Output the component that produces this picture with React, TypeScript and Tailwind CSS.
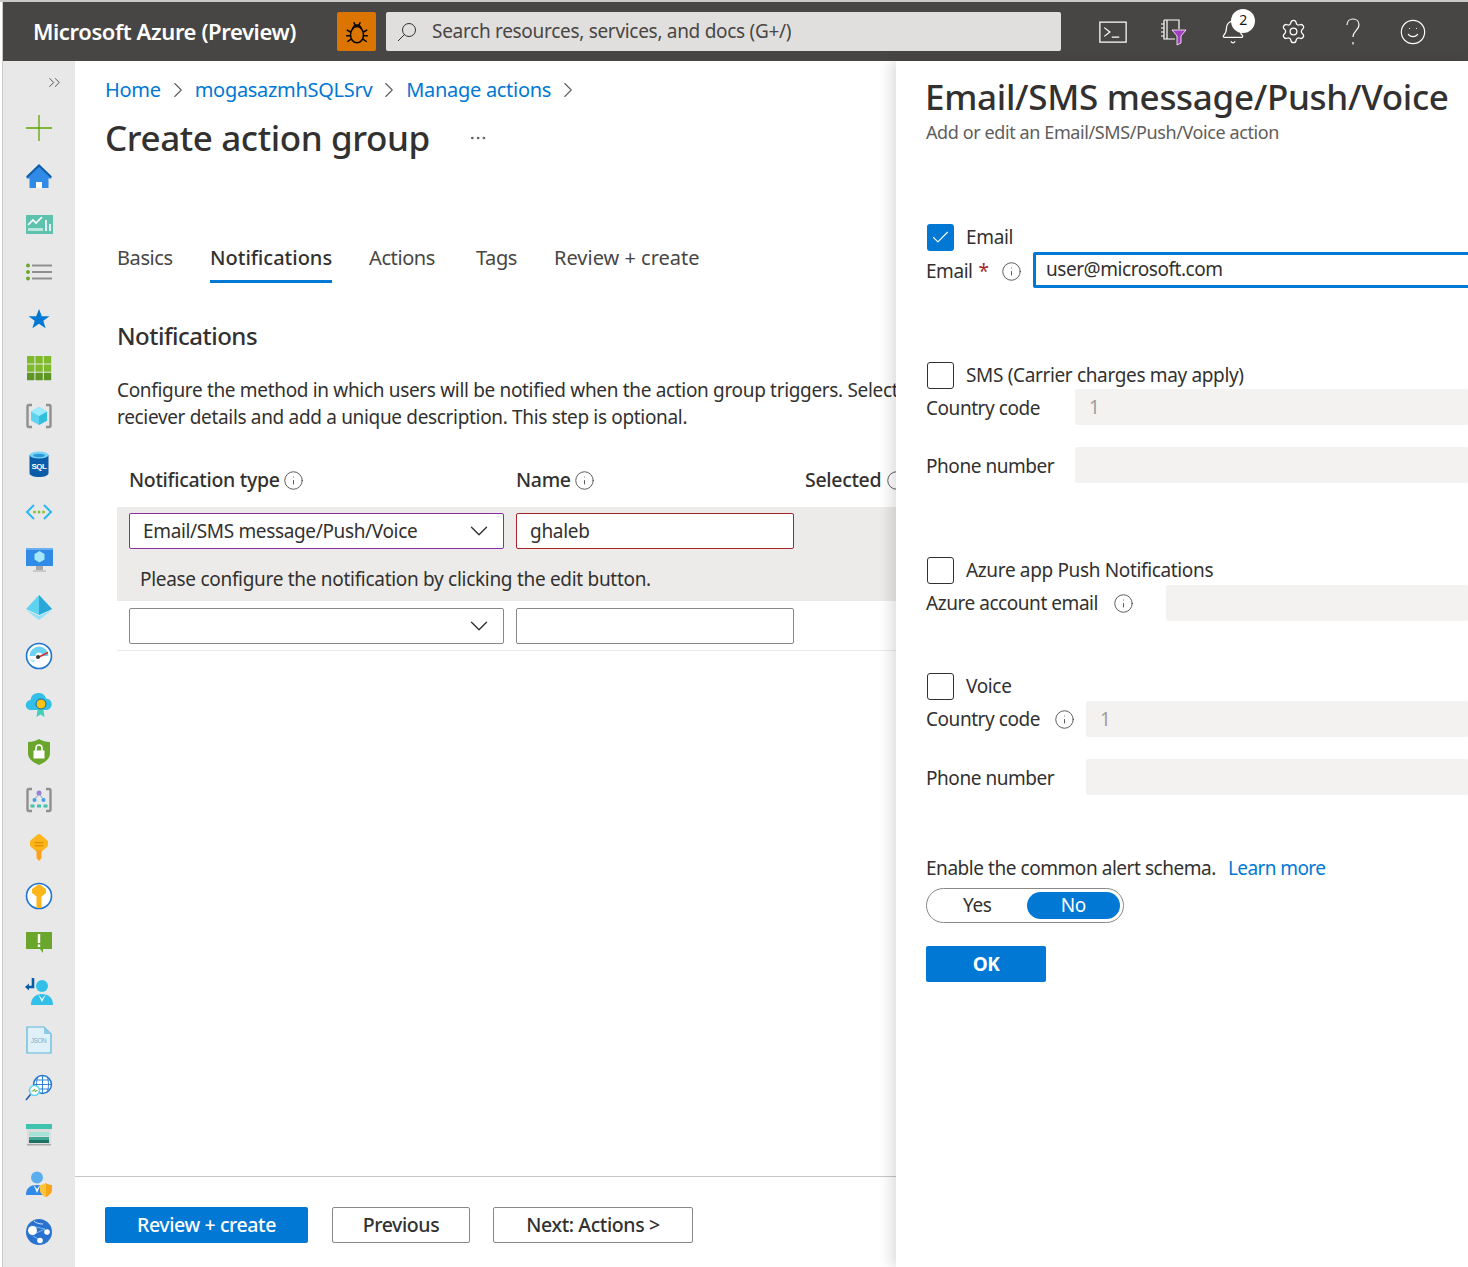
import { Bell, Check, ChevronDown, ChevronRight, ChevronsRight, Ellipsis, Info, Settings, Smile } from 'lucide-react'
import type { ReactNode } from 'react'

const font = "font-['Noto_Sans','Open_Sans',sans-serif]"

function Svg({ children }: { children: ReactNode }) {
  return (
    <svg viewBox="0 0 28 28" className="w-7 h-7">
      {children}
    </svg>
  )
}

// Sidebar service icons, drawn by hand
const sideIcons: ReactNode[] = [
  <Svg><path d="M14 1v26M1 14h26" stroke="#5ea500" strokeWidth="1.3" fill="none" /></Svg>,
  <Svg>
    <path d="M14 4 27 16.5h-3.5V26h-19V16.5H1z" fill="#2f8ae8" />
    <path d="M14 2 1 14.5l1.5 1.5L14 5l11.5 11 1.5-1.5z" fill="#0f5fa8" />
    <path d="M11 20h6v6h-6z" fill="#fff" />
  </Svg>,
  <Svg>
    <path d="M1 5h27v19H1z" fill="#5fc2ae" />
    <path d="M3 15l5-5 3 3 6-6" stroke="#fff" strokeWidth="1.6" fill="none" />
    <path d="M3 18h15v3H3z" fill="#b9e6dc" />
    <path d="M20 10h2v11h-2zM24 14h2v7h-2z" fill="#e2f5f0" />
  </Svg>,
  <Svg>
    <circle cx="3" cy="7.5" r="2" fill="#6fa82c" />
    <circle cx="3" cy="14" r="2" fill="#6fa82c" />
    <circle cx="3" cy="20.5" r="2" fill="#6fa82c" />
    <path d="M7 6.5h20v2H7zM7 13h20v2H7zM7 19.5h20v2H7z" fill="#8f8f8f" />
  </Svg>,
  <Svg><path d="m14 3 2.8 7.2h7.700l-6.200 4.600 2.300 7.500L14 17.800l-6.600 4.500 2.300-7.500-6.200-4.600h7.700z" fill="#0078d4" /></Svg>,
  <Svg>
    <path d="M2 2h7.400v7.400H2zM10.400 2h7.400v7.400h-7.400zM18.800 2h7.400v7.400h-7.400zM2 10.400h7.400v7.400H2zM10.400 10.400h7.400v7.400h-7.400zM18.800 10.400h7.400v7.400h-7.400z" fill="#7fba2c" />
    <path d="M2 18.800h7.400v7.400H2zM10.400 18.800h7.400v7.400h-7.400zM18.800 18.800h7.400v7.400h-7.400z" fill="#5e9624" />
  </Svg>,
  <Svg>
    <path d="M7 3H4Q2.500 3 2.500 5v18q0 2 1.500 2h3M21 3h3q1.500 0 1.500 2v18q0 2-1.500 2h-3" stroke="#8f8f8f" strokeWidth="2.400" fill="none" />
    <path d="m14 5 8 4.500v9L14 23l-8-4.500v-9z" fill="#5ed3f0" />
    <path d="m14 14 8-4.500v9L14 23z" fill="#32bedd" />
    <path d="m14 5 8 4.500-8 4.500-8-4.500z" fill="#9cebff" />
  </Svg>,
  <Svg>
    <path d="M4.500 5v18c0 2.500 4.200 4 9.500 4s9.500-1.500 9.500-4V5z" fill="#0a5ca8" />
    <ellipse cx="14" cy="5" rx="9.500" ry="3.500" fill="#7ad4f5" />
    <ellipse cx="14" cy="5.500" rx="6" ry="1.700" fill="#2a9bd8" />
    <text x="14" y="19" textAnchor="middle" fontSize="8" fontWeight="700" fill="#fff" fontFamily="Liberation Sans, sans-serif">SQL</text>
  </Svg>,
  <Svg>
    <path d="M9 7 2 14l7 7M19 7l7 7-7 7" stroke="#2ab8f0" strokeWidth="2" fill="none" />
    <circle cx="9.500" cy="14" r="1.500" fill="#8ac23a" />
    <circle cx="14" cy="14" r="1.500" fill="#8ac23a" />
    <circle cx="18.500" cy="14" r="1.500" fill="#8ac23a" />
  </Svg>,
  <Svg>
    <path d="M1 2h27v18H1z" fill="#2f8ae8" />
    <path d="M1 2h27v2H1z" fill="#6aaef0" />
    <path d="m14.500 5 5 3v5.500l-5 3-5-3V8z" fill="#a5e8fa" />
    <path d="M11 20h7v4h-7z" fill="#a8a8a8" />
    <path d="M8 24h13v2H8z" fill="#c8c8c8" />
  </Svg>,
  <Svg>
    <path d="M14 1 27 15l-13 6L1 15z" fill="#5ed3f0" />
    <path d="M14 1 27 15l-13 6z" fill="#2aa6d8" />
    <path d="m1 16 13 6 13-6-13 10z" fill="#8fe2f8" />
  </Svg>,
  <Svg>
    <circle cx="14" cy="14" r="12.500" fill="#fff" stroke="#1e76d2" strokeWidth="1.600" />
    <path d="M4.500 14a9.500 9.500 0 0 1 19 0h-6a3.500 3.500 0 0 0-7 0z" fill="#6dd2f2" />
    <path d="M4.500 17a9.500 9.500 0 0 0 4 4l2-3z" fill="#b6ecfa" />
    <path d="m14 15 9-4.500" stroke="#e0292f" strokeWidth="1.400" />
    <circle cx="13" cy="15" r="2" fill="#333" />
  </Svg>,
  <Svg>
    <path d="M6 20a5 5 0 0 1-.5-10A8 8 0 0 1 21 8.500a5.800 5.800 0 0 1 1 11.500z" fill="#32c0e8" />
    <path d="m13 17 5 0 1.500 10-4-2.500-4 2.500z" fill="#41d1b8" />
    <circle cx="16" cy="14" r="5" fill="#f9c510" stroke="#1e5fa8" />
  </Svg>,
  <Svg>
    <path d="M14 1c3 2 7 3 11 3v11c0 6-5 9.500-11 12C8 24.500 3 21 3 15V4c4 0 8-1 11-3z" fill="#6aa62c" />
    <path d="M8.500 12.500h11v8h-11z" fill="#fff" />
    <path d="M11 13v-3a3 3 0 0 1 6 0v3" stroke="#fff" strokeWidth="1.600" fill="none" />
  </Svg>,
  <Svg>
    <path d="M7 3H4Q2.500 3 2.500 5v18q0 2 1.500 2h3M21 3h3q1.500 0 1.500 2v18q0 2-1.500 2h-3" stroke="#8f8f8f" strokeWidth="2.400" fill="none" />
    <path d="M14 8 9 14M14 8l5 6" stroke="#7aa7cc" />
    <circle cx="14" cy="7" r="2.500" fill="#9a7fd8" />
    <circle cx="9.500" cy="14" r="2" fill="#4a9de8" />
    <circle cx="18.500" cy="14" r="2" fill="#4a9de8" />
    <path d="M5.500 18.500h4v3h-4zM12 18.500h4v3h-4zM18.500 18.500h4v3h-4z" fill="#3fc2ae" />
  </Svg>,
  <Svg>
    <path d="M14 0q1 0 2 1l6 5q1 1 1 2v3q0 1-1 2l-6 5H12l-6-5q-1-1-1-2V8q0-1 1-2l6-5q1-1 2-1z" fill="#fdb51c" />
    <path d="M11.500 16h5v8l-2.500 3-2.500-3z" fill="#fda11c" />
    <path d="M9.500 8h9v1.200h-9zM9.500 11h9v1.200h-9z" fill="#e08d00" />
  </Svg>,
  <Svg>
    <circle cx="14" cy="14" r="12.500" fill="#fff" stroke="#1e76d2" strokeWidth="1.600" />
    <path d="m14 2 7 5v4l-4.500 3.500V26h-5V14.500L7 11V7z" fill="#fdb51c" />
  </Svg>,
  <Svg>
    <path d="M1 2h26v17H1z" fill="#6aa62c" />
    <path d="m15 19 3 0 0 4z" fill="#6aa62c" />
    <path d="M12.800 4h2.400v9h-2.400zM12.800 14.500h2.400V17h-2.400z" fill="#fff" />
  </Svg>,
  <Svg>
    <circle cx="17" cy="8" r="6" fill="#32c0e8" />
    <path d="M6 27c0-7 4-11 11-11s11 4 11 11z" fill="#32c0e8" />
    <path d="m13 16 4 5 4-5-4 8z" fill="#fff" />
    <path d="M8 0v9H3" stroke="#0a5ca8" strokeWidth="2.600" fill="none" />
    <path d="m0 9 4-3.500v7z" fill="#0a5ca8" />
  </Svg>,
  <Svg>
    <path d="M2 1h17l7 7v19H2z" fill="#dff0f8" stroke="#5ab4de" strokeWidth="1.200" />
    <path d="M19 1v7h7z" fill="#8acbe8" />
    <text x="13.500" y="17" textAnchor="middle" fontSize="6.500" fill="#7fb0cc" fontFamily="Liberation Sans, sans-serif">JSON</text>
  </Svg>,
  <Svg>
    <circle cx="17.500" cy="10.500" r="9" fill="#fff" stroke="#1e76d2" strokeWidth="1.400" />
    <path d="M8.500 10.500h18M17.500 1.500v18M10 6h15M10 15h15M13 2.500c-2 5-2 11 0 16M22 2.500c2 5 2 11 0 16" stroke="#1e76d2" fill="none" strokeWidth=".9" />
    <circle cx="9.500" cy="16.500" r="5" fill="#fff" stroke="#5ed3f0" strokeWidth="1.600" />
    <path d="M6.500 17h2l1-2 1 3 1-1.500h1" stroke="#6aa62c" fill="none" />
    <path d="M5.500 20.500 1 26" stroke="#1e5fa8" strokeWidth="1.600" />
  </Svg>,
  <Svg>
    <path d="M1 2h26v5H1z" fill="#3fc2ae" />
    <path d="M2 7h24v15H2z" fill="#dcdcdc" />
    <path d="M4 10h20v4H4z" fill="#a6e3d6" />
    <path d="M4 15h20v3H4z" fill="#3fa796" />
    <path d="M4 18h20v3H4z" fill="#1f6f63" />
    <path d="M2 22h24v1.500H2z" fill="#a8a8a8" />
  </Svg>,
  <Svg>
    <circle cx="12" cy="7.500" r="6" fill="#5aaef0" />
    <path d="M1 25c0-7 4-10 11-10 4 0 7 1 9 3v7z" fill="#2f8ae8" />
    <path d="m8.500 15 3.500 4 3.500-4-3.500 8z" fill="#fff" />
    <path d="M21 13c2 1.500 4 2 6 2v5c0 3-3 5.500-6 7-3-1.500-6-4-6-7v-5c2 0 4-.5 6-2z" fill="#f9a51a" />
    <path d="M21 13v14c-3-1.500-6-4-6-7v-5c2 0 4-.5 6-2z" fill="#fdc43d" />
  </Svg>,
  <Svg>
    <circle cx="14" cy="14" r="13" fill="#2a72d0" />
    <path d="M6 8 20 11M7 17l13-6M8 18l9 5" stroke="#7ab5ee" />
    <circle cx="7.500" cy="12.500" r="4.500" fill="#fff" />
    <circle cx="22" cy="14" r="2.800" fill="#fff" />
    <circle cx="15" cy="22.500" r="2.800" fill="#fff" />
    <path d="M9 3c2 2 5 3 9 3" stroke="#cfe6fb" fill="none" />
  </Svg>,
]

function HeaderIcons() {
  return (
    <div className="flex items-center h-full gap-[30px] ml-[37px]">
      <svg viewBox="0 0 24 24" className="w-[30px] h-[30px] shrink-0" fill="none" stroke="#fff" strokeWidth="1">
        <path d="M1.500 4h21v16h-21z" />
        <path d="m5 8.500 4.500 3.500L5 15.500M11 16h6" />
      </svg>
      <svg viewBox="0 0 30 30" className="w-[30px] h-[30px] shrink-0" fill="none">
        <path d="M6 3h15v9M17 22H6V3M9 3v19M3 7h3M3 11h3M3 15h3M3 19h3" stroke="#fff" strokeWidth="1.200" />
        <path d="M14 13h14l-5 6v7l-4 2v-9z" fill="#a13fc0" stroke="#fff" strokeWidth=".8" />
      </svg>
      <div className="relative w-[30px] h-[30px] shrink-0">
        <Bell size={26} strokeWidth={1.1} color="#fff" className="absolute left-[2px] top-[2px]" />
        <span className="absolute left-[13px] -top-[8px] w-[24px] h-[24px] rounded-full bg-white text-[#1b1a19] text-[14px] leading-[22px] text-center">2</span>
      </div>
      <Settings size={27} strokeWidth={1.1} color="#fff" className="shrink-0 mx-[1.500px]" />
      <svg viewBox="0 0 30 30" className="w-[30px] h-[30px] shrink-0" fill="none" stroke="#fff" strokeWidth="1.200">
        <path d="M9 8c0-3.500 2.500-6 6-6s6 2.500 6 6c0 5-6 6-6 12M15 25v2.500" />
      </svg>
      <Smile size={28} strokeWidth={1} color="#fff" className="shrink-0 ml-px" />
    </div>
  )
}

function Crumb({ label }: { label: string }) {
  return (
    <>
      <span className="text-[#0078d4]">{label}</span>
      <ChevronRight size={26} strokeWidth={1} className="text-[#605e5c] mx-[4px]" />
    </>
  )
}

function Tip({ className = '' }: { className?: string }) {
  return <Info size={21} strokeWidth={1} className={`text-[#484644] shrink-0 ${className}`} />
}

function Tab({ label, active, className }: { label: string; active?: boolean; className: string }) {
  return (
    <div className={`h-[47px] flex items-center whitespace-nowrap border-b-[3px] ${active ? 'border-[#0078d4] font-medium text-[#323130] tracking-normal' : 'border-transparent text-[#484644]'} ${className}`}>
      {label}
    </div>
  )
}

function SelectBox({ value, border }: { value?: string; border: string }) {
  return (
    <div className={`w-[375px] h-[36px] shrink-0 bg-white border rounded-[2px] flex items-center justify-between pl-[13px] pr-[9px] ${border}`}>
      <span className="pt-px tracking-[-0.35px]">{value}</span>
      <ChevronDown size={30} strokeWidth={1.1} className="text-[#323130]" />
    </div>
  )
}

function NameBox({ value, border }: { value?: string; border: string }) {
  return (
    <div className={`w-[278px] h-[36px] shrink-0 bg-white border rounded-[2px] flex items-center pl-[13px] ${border}`}>
      {value}
    </div>
  )
}

function CheckRow({ label, checked, className }: { label: string; checked?: boolean; className: string }) {
  return (
    <div className={`flex items-center gap-[12px] h-[27px] pl-px tracking-[-0.35px] ${className}`}>
      <div className={`w-[27px] h-[27px] rounded-[3px] flex items-center justify-center ${checked ? 'bg-[#0078d4]' : 'border border-[#323130] bg-white'}`}>
        {checked && <Check size={21} strokeWidth={1.3} color="#fff" />}
      </div>
      <span>{label}</span>
    </div>
  )
}

function DisabledRow({ label, value, tip, left, className = '' }: { label: string; value?: string; tip?: ReactNode; left: string; className?: string }) {
  return (
    <div className={`flex items-center h-[36px] ${className}`}>
      <div className={`flex items-center shrink-0 ${tip ? '' : 'pt-[2px]'} ${left}`}>
        <span className="whitespace-nowrap">{label}</span>
        {tip}
      </div>
      <div className="flex-1 h-[36px] bg-[#f3f2f1] rounded-[2px] pl-[14px] pt-px flex items-center text-[#a19f9d]">{value}</div>
    </div>
  )
}

export default function App() {
  return (
    <div className={`w-[1468px] h-[1267px] overflow-hidden flex flex-col bg-white border-t-2 border-[#c9c9c9] pl-[2px] text-[19px] tracking-[-0.45px] text-[#323130] ${font}`}>
      {/* Top bar */}
      <header className="h-[59px] shrink-0 bg-[#484644] border-l border-[#c9c9c9] flex items-center text-white">
        <div className="w-[334px] pl-[30px] text-[22px] font-semibold tracking-[-0.4px] whitespace-nowrap shrink-0">Microsoft Azure (Preview)</div>
        <div className="w-[39px] h-[39px] rounded-[2px] bg-[#db7500] flex items-center justify-center shrink-0">
          <svg viewBox="0 0 24 24" className="w-[26px] h-[26px]" fill="none" stroke="#000" strokeWidth="1.400">
            <ellipse cx="12" cy="14.500" rx="6" ry="7.500" />
            <path d="M8 9.500a4 4 0 0 1 8 0M9 3l1.500 3M15 3l-1.500 3M6 12 2.500 10M18 12l3.500-2M6 15.500H2M18 15.500h4M6.500 18.500 3 21M17.500 18.500 21 21" />
          </svg>
        </div>
        <div className="w-[675px] h-[39px] ml-[10px] shrink-0 rounded-[2px] bg-[#e1dfdd] flex items-center pl-[11px] gap-[15px] tracking-[-0.3px] text-[#484644] whitespace-nowrap">
          <svg viewBox="0 0 20 20" className="w-5 h-5 shrink-0" fill="none" stroke="#323130" strokeWidth="1">
            <circle cx="12" cy="8" r="6.500" />
            <path d="M7.500 12.500 1 19" />
          </svg>
          <span>Search resources, services, and docs (G+/)</span>
        </div>
        <HeaderIcons />
      </header>

      <div className="flex-1 flex min-h-0">
        {/* Left service rail */}
        <aside className="w-[73px] shrink-0 bg-[#e8e8e8] border-l border-[#c9c9c9] flex flex-col">
          <div className="h-[43px] shrink-0 flex justify-end items-center pr-[11px]">
            <ChevronsRight size={19} strokeWidth={1} className="text-[#323130]" />
          </div>
          {sideIcons.map((icon, i) => (
            <div key={i} className="h-[48px] shrink-0 flex items-center justify-center">
              {icon}
            </div>
          ))}
        </aside>

        {/* Main blade */}
        <main className="flex-1 min-w-0 flex flex-col overflow-hidden tracking-[-0.3px]">
          <div className="flex-1 min-h-0 overflow-hidden">
            <div className="pl-[30px] pt-[14px]">
              <div className="flex items-center h-[30px] text-[20px] tracking-[-0.3px]">
                <Crumb label="Home" />
                <Crumb label="mogasazmhSQLSrv" />
                <Crumb label="Manage actions" />
              </div>
              <div className="flex items-center mt-[9px] h-[48px]">
                <h1 className="text-[35px] font-medium tracking-[-0.4px] whitespace-nowrap">Create action group</h1>
                <Ellipsis size={20} strokeWidth={1} className="ml-[38px] text-[#323130]" />
              </div>
            </div>

            <div className="pl-[42px] mt-[74px]">
              <div className="flex items-center text-[20px] tracking-[-0.4px]">
                <Tab label="Basics" className="w-[93px]" />
                <Tab label="Notifications" active className="w-[122px]" />
                <Tab label="Actions" className="w-[107px] pl-[37px]" />
                <Tab label="Tags" className="w-[78px] pl-[37px]" />
                <Tab label="Review + create" className="pl-[37px] tracking-[0px]" />
              </div>
              <h2 className="mt-[37px] text-[24px] font-medium tracking-[-0.5px] leading-[32px]">Notifications</h2>
              <p className="mt-[25px] leading-[27px] whitespace-nowrap tracking-[-0.33px] w-[779px]">
                Configure the method in which users will be notified when the action group triggers. Select<br />
                reciever details and add a unique description. This step is optional.
              </p>

              <div className="flex items-center h-[30px] mt-[34px] pl-[12px] font-medium text-[19.500px] whitespace-nowrap">
                <div className="w-[387px] shrink-0 flex items-center gap-[3px]">Notification type<Tip /></div>
                <div className="w-[289px] shrink-0 flex items-center gap-[3px]">Name<Tip /></div>
                <div className="flex items-center gap-[5px] shrink-0">Selected<Tip /></div>
              </div>

              <div className="mt-[12px] bg-[#edebe9] h-[94px] pl-[12px] pt-[6px]">
                <div className="flex gap-[12px]">
                  <SelectBox value="Email/SMS message/Push/Voice" border="border-[#8a2da5]" />
                  <NameBox value="ghaleb" border="border-[#a4262c]" />
                </div>
                <p className="pl-[11px] mt-[16px] leading-[28px] whitespace-nowrap">Please configure the notification by clicking the edit button.</p>
              </div>
              <div className="h-[50px] pl-[12px] pt-[7px] flex gap-[12px] border-b border-[#edebe9]">
                <SelectBox border="border-[#8a8886]" />
                <NameBox border="border-[#8a8886]" />
              </div>
            </div>
          </div>

          {/* Footer actions */}
          <footer className="h-[91px] shrink-0 border-t border-[#c8c6c4] pl-[30px] pt-[30px] flex gap-[24px] text-[19.500px] font-medium tracking-[-0.4px]">
            <button className="w-[203px] h-[36px] rounded-[2px] bg-[#0078d4] text-white">Review + create</button>
            <button className="w-[138px] h-[36px] rounded-[2px] border border-[#8a8886]">Previous</button>
            <button className="w-[200px] h-[36px] rounded-[2px] border border-[#8a8886] -ml-px">Next: Actions &gt;</button>
          </footer>
        </main>

        {/* Context pane */}
        <section className="w-[572px] shrink-0 relative z-10 bg-white pl-[30px] overflow-hidden shadow-[-6px_0_12px_rgba(0,0,0,0.12)]">
          <h2 className="text-[35px] font-medium leading-[48px] mt-[12px] -ml-px tracking-[-0.3px] whitespace-nowrap">Email/SMS message/Push/Voice</h2>
          <p className="text-[18px] leading-[24px] text-[#605e5c] -mt-[1px] tracking-[-0.4px]">Add or edit an Email/SMS/Push/Voice action</p>

          <CheckRow label="Email" checked className="mt-[80px]" />
          <div className="flex items-center h-[36px] mt-px">
            <div className="w-[107px] shrink-0 flex items-center pt-[2px]">
              <span>Email</span>
              <span className="text-[#a4262c] ml-[6px] mr-[12px]">*</span>
              <Tip />
            </div>
            <div className="flex-1 -mr-[4px] h-[36px] border-[3px] border-[#0078d4] rounded-[2px] flex items-center pl-[10px] pb-[2px]">user@microsoft.com</div>
          </div>

          <CheckRow label="SMS (Carrier charges may apply)" className="mt-[74px]" />
          <DisabledRow label="Country code" value="1" left="w-[149px]" />
          <DisabledRow label="Phone number" left="w-[149px]" className="mt-[22px]" />

          <CheckRow label="Azure app Push Notifications" className="mt-[74px]" />
          <DisabledRow label="Azure account email" left="w-[240px] gap-[15px]" tip={<Tip />} className="mt-px" />

          <CheckRow label="Voice" className="mt-[52px]" />
          <DisabledRow label="Country code" value="1" left="w-[160px] gap-[14px]" tip={<Tip />} className="mt-px" />
          <DisabledRow label="Phone number" left="w-[160px]" className="mt-[22px]" />

          <div className="mt-[59px] h-[28px] flex items-center">
            <span>Enable the common alert schema.</span>
            <span className="text-[#0078d4] ml-[12px] tracking-[-0.6px]">Learn more</span>
          </div>
          <div className="mt-[6px] w-[198px] h-[35px] rounded-full border border-[#8a8886] flex items-center px-[3px]">
            <div className="w-[95px] text-center">Yes</div>
            <div className="w-[94px] h-[27px] ml-[2px] rounded-full bg-[#0078d4] text-white text-center leading-[27px]">No</div>
          </div>
          <button className="mt-[23px] w-[120px] h-[36px] block rounded-[2px] bg-[#0078d4] text-white font-bold">OK</button>
        </section>
      </div>
    </div>
  )
}
